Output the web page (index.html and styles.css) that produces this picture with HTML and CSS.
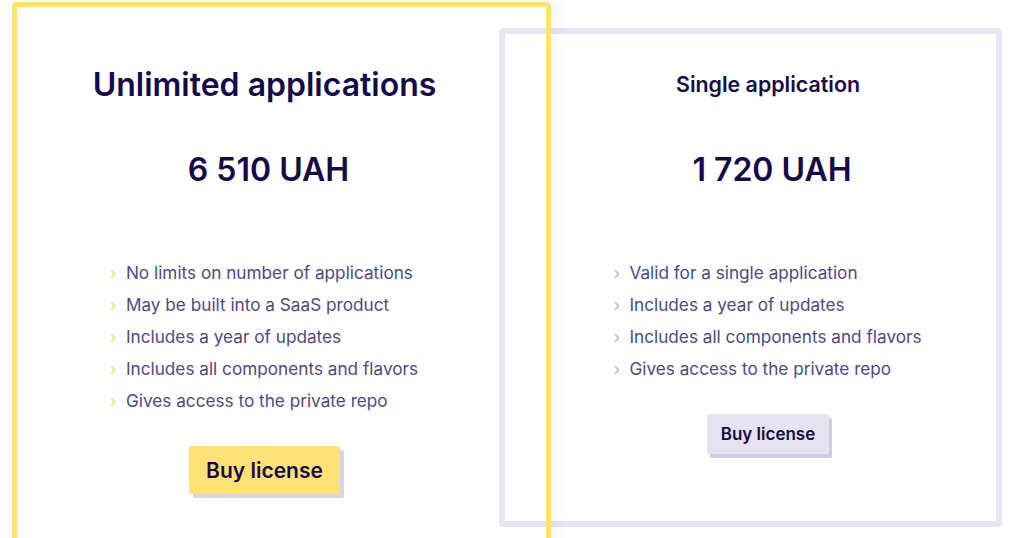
FILE: index.html
```html
<!DOCTYPE html>
<html lang="en">
<head>
<meta charset="UTF-8">
<title>Licenses</title>
<link rel="stylesheet" href="styles.css">
</head>
<body>
<div class="plans">
    <div class="plan featured">
        <h2 class="plan-title">Unlimited applications</h2>
        <div class="plan-price">6 510 UAH</div>
        <ul class="plan-features">
            <li>No limits on number of applications</li>
            <li>May be built into a SaaS product</li>
            <li>Includes a year of updates</li>
            <li>Includes all components and flavors</li>
            <li>Gives access to the private repo</li>
        </ul>
        <button class="buy">Buy license</button>
    </div>
    <div class="plan basic">
        <h2 class="plan-title">Single application</h2>
        <div class="plan-price">1 720 UAH</div>
        <ul class="plan-features">
            <li>Valid for a single application</li>
            <li>Includes a year of updates</li>
            <li>Includes all components and flavors</li>
            <li>Gives access to the private repo</li>
        </ul>
        <button class="buy">Buy license</button>
    </div>
</div>
</body>
</html>
```

FILE: styles.css
```css
body {
  font-family: 'Inter', 'Noto Sans', sans-serif;
  background-color: #fff;
  color: #170a48;
  margin: 0;
  overflow: hidden;
}

.plans {
  display: flex;
  align-items: flex-start;
  padding: 2px 0 0 12px;
}

.plan {
  box-sizing: border-box;
  display: flex;
  flex-direction: column;
  align-items: center;
  border-radius: 4px;
}

.featured {
  position: relative;
  z-index: 1;
  width: 539px;
  height: 570px;
  border: 5px solid #ffe175;
  padding: 59px 34px 0 0;
  box-shadow: 6px 0 14px rgba(30, 20, 80, 0.05);
}

.basic {
  width: 503px;
  height: 499px;
  margin: 26px 0 0 -52px;
  border: 6px solid #e7e5f3;
  padding: 36px 0 0 35px;
  background-color: #fff;
}

.plan-title {
  margin: 0;
  font-weight: 600;
}

.featured .plan-title {
  font-size: 32px;
  line-height: 38px;
}

.basic .plan-title {
  font-size: 21.4px;
  line-height: 28px;
}

.plan-price {
  font-size: 32px;
  line-height: 40px;
  font-weight: 600;
  padding-left: 8px;
}

.featured .plan-price {
  margin-top: 46px;
}

.basic .plan-price {
  margin-top: 52px;
}

.plan-features {
  list-style: none;
  margin: 67px 0 0;
  padding: 0;
  color: #4f4a7e;
  font-size: 17.2px;
  line-height: 32px;
}

.plan-features li::before {
  content: '\203A';
  display: inline-block;
  width: 16px;
  margin-left: -1px;
  font-size: 17px;
}

.featured .plan-features li::before {
  color: #ffd85c;
}

.basic .plan-features li::before {
  color: #b3b0cc;
}

.buy {
  margin-top: 29px;
  border: none;
  border-radius: 2px;
  font-family: inherit;
  font-weight: 600;
  color: #170a48;
  cursor: pointer;
}

.featured .buy {
  background-color: #ffe175;
  font-size: 21px;
  height: 48px;
  padding: 0 17px;
  box-shadow: 4px 4px 0 #d7d5e5;
}

.basic .buy {
  background-color: #e5e3ef;
  font-size: 17px;
  height: 40px;
  padding: 0 14px;
  box-shadow: 3px 4px 0 #cfcde0;
}
```
